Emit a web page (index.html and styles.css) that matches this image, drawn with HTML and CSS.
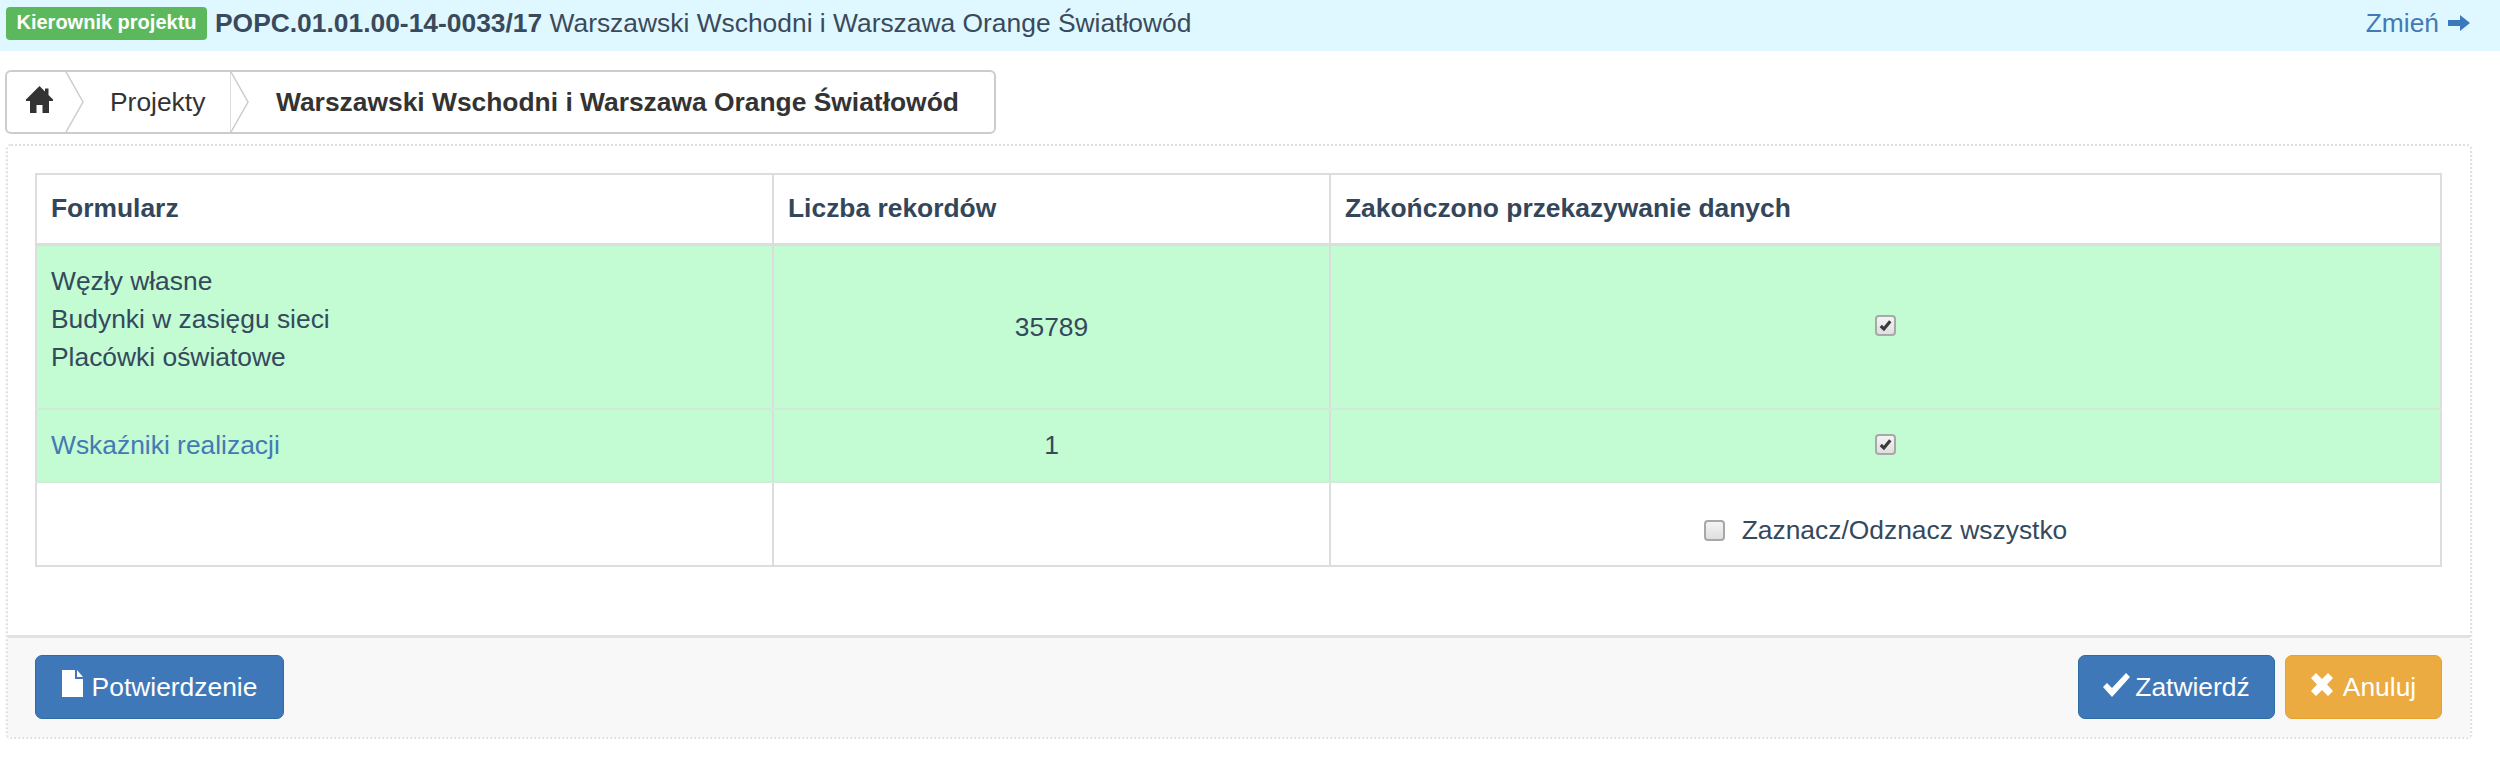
FILE: index.html
```html
<!DOCTYPE html>
<html lang="pl">
<head>
    <meta charset="UTF-8">
    <title>Warszawski Wschodni i Warszawa Orange Światłowód</title>
    <link rel="stylesheet" href="styles.css">
</head>
<body>

<!-- Project bar -->
<div class="project-bar">
    <span class="badge">Kierownik projektu</span>
    <span class="project-name"><b>POPC.01.01.00-14-0033/17</b> Warszawski Wschodni i Warszawa Orange Światłowód</span>
    <a class="change-link" href="#">Zmień
        <svg class="icon-arrow" viewBox="0 0 22 16"><path d="M0 5h12V0l10 8-10 8v-5H0z"/></svg>
    </a>
</div>

<!-- Breadcrumb -->
<div class="breadcrumb">
    <a class="crumb crumb-home" href="#">
        <svg class="icon-home" viewBox="0 0 27 27"><path d="M13.500 0L19 5.500V2.500h3.500V9L27 13.500V15h-4v12h-6.500v-8h-6v8H4V15H0v-1.500z"/></svg>
        <svg class="crumb-arrow" viewBox="0 0 20 60"><path d="M1 0l17 30L1 60"/></svg>
    </a>
    <a class="crumb crumb-link" href="#">Projekty
        <svg class="crumb-arrow" viewBox="0 0 20 60"><path d="M1 0l17 30L1 60"/></svg>
    </a>
    <span class="crumb crumb-current">Warszawski Wschodni i Warszawa Orange Światłowód</span>
</div>

<!-- Form panel -->
<div class="panel">
    <div class="panel-body">
        <table class="data-table">
            <thead>
                <tr>
                    <th class="col-form">Formularz</th>
                    <th class="col-count">Liczba rekordów</th>
                    <th>Zakończono przekazywanie danych</th>
                </tr>
            </thead>
            <tbody>
                <tr class="row-done row-tall">
                    <td class="cell-list">Węzły własne<br>Budynki w zasięgu sieci<br>Placówki oświatowe</td>
                    <td class="center cell-count">35789</td>
                    <td class="center">
                        <span class="check">
                            <svg viewBox="0 0 16 16"><path d="M3.500 8.500l3 2.700L12.500 4"/></svg>
                        </span>
                    </td>
                </tr>
                <tr class="row-done row-short">
                    <td><a href="#">Wskaźniki realizacji</a></td>
                    <td class="center">1</td>
                    <td class="center">
                        <span class="check">
                            <svg viewBox="0 0 16 16"><path d="M3.500 8.500l3 2.700L12.500 4"/></svg>
                        </span>
                    </td>
                </tr>
                <tr class="row-last">
                    <td></td>
                    <td></td>
                    <td class="center cell-all"><span class="check check-all"></span>Zaznacz/Odznacz wszystko</td>
                </tr>
            </tbody>
        </table>
    </div>
    <div class="panel-footer">
        <button class="btn btn-blue btn-wide">
            <svg class="icon-file" viewBox="0 0 21 27"><path d="M0 0h13v9h8v18H0zM15 0l6 7h-6z"/></svg>
            Potwierdzenie
        </button>
        <div class="footer-right">
            <button class="btn btn-blue btn-save">
                <svg class="icon-ok" viewBox="0 0 27 24"><path d="M0 14l4-4 5 5L23 0l4 4L9 24z"/></svg>
                Zatwierdź
            </button>
            <button class="btn btn-orange btn-cancel">
                <svg class="icon-x" viewBox="0 0 22 23"><path d="M0 5l5-5 6 6 6-6 5 5-6 6.500 6 6.500-5 5-6-6-6 6-5-5 6-6.500z"/></svg>
                Anuluj
            </button>
        </div>
    </div>
</div>

</body>
</html>
```

FILE: styles.css
```css
/* General Styles */
body {
    margin: 0;
    background-color: #ffffff;
    color: #34495e;
    font-family: "Liberation Sans", Arial, sans-serif;
    font-size: 26.4px;
}

a {
    color: #4479b5;
    text-decoration: none;
}

/* Project bar */
.project-bar {
    height: 51px;
    box-sizing: border-box;
    padding: 7px 30px 0 6px;
    display: flex;
    align-items: flex-start;
    background-color: #dff8ff;
}

.badge {
    width: 201px;
    height: 33px;
    line-height: 30px;
    text-align: center;
    background-color: #5cb85c;
    border-radius: 4px;
    color: #ffffff;
    font-size: 20px;
    font-weight: bold;
}

.project-name {
    margin-left: 8px;
    line-height: 32px;
    color: #3a4a5c;
}

.change-link {
    margin-left: auto;
    line-height: 32px;
    display: flex;
    align-items: center;
    gap: 9px;
    color: #4479b5;
}

.icon-arrow {
    width: 22px;
    height: 16px;
    fill: #3b78bd;
}

/* Breadcrumb */
.breadcrumb {
    width: 991px;
    height: 64px;
    margin: 19px 0 10px 5px;
    box-sizing: border-box;
    display: flex;
    align-items: center;
    border: 2px solid #cccccc;
    border-radius: 6px;
    background-color: #ffffff;
}

.crumb {
    height: 100%;
    display: flex;
    align-items: center;
    position: relative;
    color: #333333;
}

.crumb-home {
    width: 58px;
    padding-left: 19px;
    box-sizing: border-box;
}

.crumb-link {
    width: 166px;
    padding-left: 45px;
    box-sizing: border-box;
    border-right: 1px solid #dddddd;
}

.crumb-current {
    margin-left: 45px;
    font-weight: bold;
}

.crumb-arrow {
    position: absolute;
    top: 0;
    right: -20px;
    width: 20px;
    height: 60px;
    fill: #ffffff;
    stroke: #cccccc;
    stroke-width: 1.5;
}

.icon-home {
    width: 27px;
    height: 27px;
    margin-bottom: 5px;
    fill: #333333;
}

/* Panel */
.panel {
    width: 2466px;
    height: 595px;
    margin-left: 6px;
    box-sizing: border-box;
    display: flex;
    flex-direction: column;
    border: 2px dotted #e0e0e0;
    border-radius: 5px;
    box-shadow: 0 1px 2px rgba(0, 0, 0, 0.06);
}

.panel-body {
    flex: 1;
    padding: 27px 28px 0 27px;
}

.data-table {
    width: 2407px;
    table-layout: fixed;
    border-collapse: collapse;
    border: 2px solid #dddddd;
}

.data-table th,
.data-table td {
    box-sizing: border-box;
    padding: 0 14px;
    border: 2px solid #dddddd;
    font-weight: normal;
    text-align: left;
    line-height: 37.7px;
}

.data-table th {
    height: 70px;
    border-bottom-width: 3px;
    font-weight: bold;
    color: #34465a;
}

.col-form {
    width: 737px;
}

.col-count {
    width: 557px;
}

.data-table .center {
    text-align: center;
}

.row-done td {
    background-color: #c3fbd2;
    border-top-color: #d2ead9;
    border-bottom-color: #d2ead9;
    border-left-color: #dddddd;
    border-right-color: #dddddd;
}

.row-tall td {
    height: 165px;
}

.data-table .cell-list {
    padding-bottom: 14px;
}

.data-table .cell-count {
    padding-top: 2px;
}

.row-short td {
    height: 73px;
}

.row-last td {
    height: 84px;
}

.data-table .cell-all {
    padding-top: 14px;
}

/* Checkbox */
.check {
    width: 21px;
    height: 21px;
    box-sizing: border-box;
    display: inline-block;
    vertical-align: middle;
    margin-bottom: 4px;
    border: 2px solid #a8a8a8;
    border-radius: 4px;
    background: linear-gradient(#f4f4f4, #dfdfdf);
}

.check svg {
    display: block;
    fill: none;
    stroke: #3a3a3a;
    stroke-width: 3;
}

.check-all {
    margin-right: 17px;
}

/* Footer */
.panel-footer {
    height: 102px;
    box-sizing: border-box;
    padding: 17px 28px 0 27px;
    display: flex;
    justify-content: space-between;
    align-items: flex-start;
    background-color: #f8f8f8;
    border-top: 3px solid #e2e2e2;
    border-radius: 0 0 5px 5px;
}

.footer-right {
    display: flex;
    gap: 10px;
}

.btn {
    height: 64px;
    box-sizing: border-box;
    padding: 0;
    display: flex;
    align-items: center;
    justify-content: center;
    border-radius: 7px;
    color: #ffffff;
    font-family: inherit;
    font-size: 26.4px;
    cursor: pointer;
}

.btn-blue {
    background-color: #3f78b8;
    border: 1px solid #2e6da4;
}

.btn-orange {
    background-color: #ebab41;
    border: 1px solid #e8a02f;
}

.btn-wide {
    width: 249px;
    gap: 9px;
}

.btn-save {
    width: 197px;
    gap: 5px;
}

.btn-cancel {
    width: 157px;
    gap: 10px;
}

.btn svg {
    fill: #ffffff;
}

.icon-file {
    width: 21px;
    height: 27px;
    margin-top: -8px;
}

.icon-ok {
    width: 27px;
    height: 24px;
    margin-top: -4px;
}

.icon-x {
    width: 22px;
    height: 23px;
    margin-top: -6px;
}
```
